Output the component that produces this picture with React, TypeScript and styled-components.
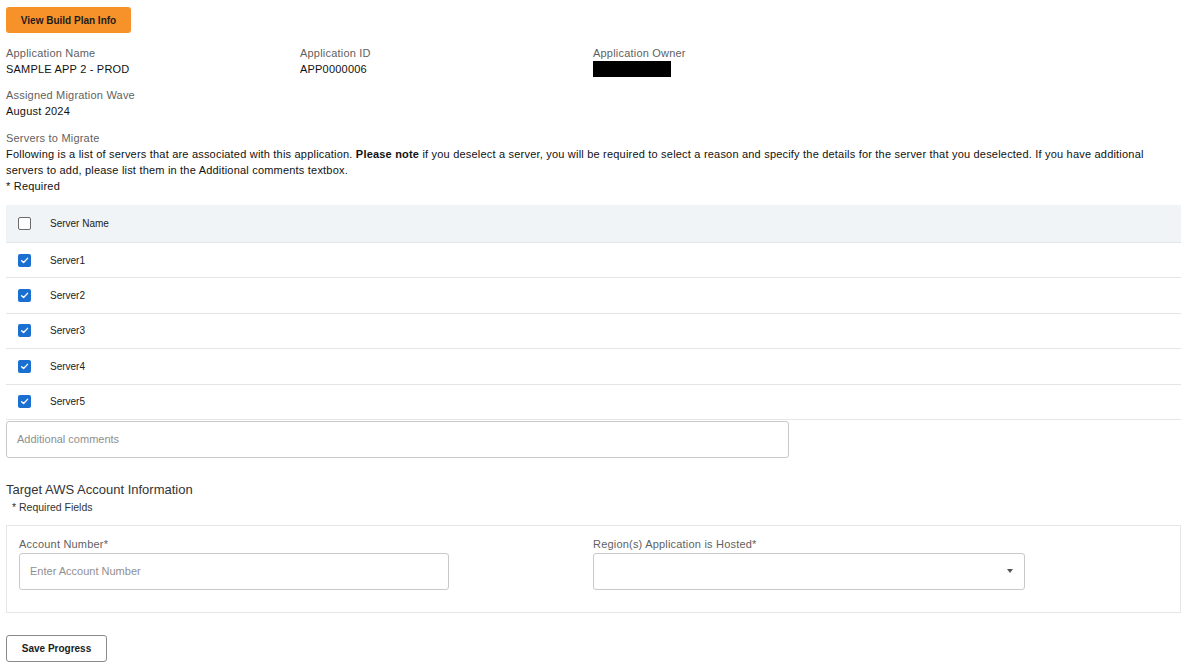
import styled, { createGlobalStyle } from "styled-components";

const GlobalStyle = createGlobalStyle`
  body {
    margin: 0;
    background: #ffffff;
    font-family: "Liberation Sans", Arial, sans-serif;
    color: #111111;
  }
`;

const Page = styled.div`
  padding: 7px 9px 4px 6px;
  width: 1175px;
`;

const OrangeButton = styled.button`
  width: 125px;
  height: 26px;
  border: none;
  border-radius: 3px;
  background: #f7922a;
  color: #1c1c1c;
  font-family: inherit;
  font-size: 10px;
  font-weight: 700;
  padding: 0;
  cursor: pointer;
`;

const InfoGrid = styled.div`
  display: grid;
  grid-template-columns: 294px 293px 1fr;
  row-gap: 10px;
  margin-top: 12px;
`;

const Field = styled.div`
  display: flex;
  flex-direction: column;
`;

const Label = styled.div`
  font-size: 11px;
  line-height: 16px;
  letter-spacing: 0.2px;
  color: #5f5f5f;
`;

const Value = styled.div`
  font-size: 11px;
  line-height: 16px;
  letter-spacing: 0.2px;
  color: #111111;
`;

const Redacted = styled.div`
  width: 78px;
  height: 16px;
  background: #000000;
`;

const Section = styled.div`
  margin-top: 11px;
`;

const Paragraph = styled.p`
  margin: 0;
  font-size: 11px;
  line-height: 16px;
  letter-spacing: 0.2px;
  color: #111111;
  width: 1160px;

  b {
    font-weight: 700;
  }
`;

const Table = styled.div`
  margin-top: 11px;
  display: flex;
  flex-direction: column;
`;

const Row = styled.div<{ $header?: boolean }>`
  display: flex;
  align-items: center;
  box-sizing: border-box;
  height: ${(p) => (p.$header ? "38px" : "35.4px")};
  padding-left: 12px;
  gap: 19px;
  background: ${(p) => (p.$header ? "#f1f4f6" : "#ffffff")};
  border-bottom: 1px solid #e3e6e8;
  font-size: 10px;
  color: #222222;
`;

const Box = styled.span<{ $checked?: boolean }>`
  width: 13px;
  height: 13px;
  box-sizing: border-box;
  border-radius: 2px;
  display: inline-flex;
  align-items: center;
  justify-content: center;
  background: ${(p) => (p.$checked ? "#1b6fd0" : "#ffffff")};
  border: ${(p) => (p.$checked ? "none" : "1.5px solid #6b6b6b")};
`;

const Check = () => (
  <svg width="9" height="9" viewBox="0 0 10 10">
    <path d="M1.8 5.2 L4 7.3 L8.4 2.6" fill="none" stroke="#ffffff" strokeWidth="1.5" strokeLinecap="round" strokeLinejoin="round" />
  </svg>
);

const Comments = styled.div`
  width: 783px;
  height: 37px;
  box-sizing: border-box;
  margin-top: 1px;
  border: 1px solid #c9c9c9;
  border-radius: 3px;
  padding-left: 10px;
  display: flex;
  align-items: center;
  font-size: 11px;
  color: #8f8f8f;
`;

const Heading = styled.div`
  margin-top: 23px;
  font-size: 13px;
  line-height: 18px;
  color: #333333;
`;

const SubNote = styled.div`
  padding-left: 6px;
  font-size: 10.5px;
  line-height: 16px;
  color: #333333;
`;

const FormBox = styled.div`
  margin-top: 10px;
  border: 1px solid #e6e6e6;
  box-sizing: border-box;
  height: 88px;
  padding: 10px 12px 0;
  display: grid;
  grid-template-columns: 574px 1fr;
`;

const FormField = styled.div`
  display: flex;
  flex-direction: column;
  gap: 1px;
`;

const InputBox = styled.div<{ $w: number }>`
  width: ${(p) => p.$w}px;
  height: 37px;
  box-sizing: border-box;
  border: 1px solid #c9c9c9;
  border-radius: 3px;
  padding: 0 10px;
  display: flex;
  align-items: center;
  justify-content: space-between;
  font-size: 11px;
  color: #8f8f8f;
`;

const Caret = styled.span`
  width: 0;
  height: 0;
  border-left: 3.5px solid transparent;
  border-right: 3.5px solid transparent;
  border-top: 4px solid #555555;
  margin-right: 1px;
`;

const OutlineButton = styled.button`
  margin-top: 22px;
  width: 101px;
  height: 27px;
  background: #ffffff;
  border: 1px solid #8a8a8a;
  border-radius: 3px;
  font-family: inherit;
  font-size: 10px;
  font-weight: 700;
  color: #1c1c1c;
  padding: 0;
  cursor: pointer;
`;

const servers = ["Server1", "Server2", "Server3", "Server4", "Server5"];

export default function App() {
  return (
    <Page>
      <GlobalStyle />
      <OrangeButton>View Build Plan Info</OrangeButton>

      <InfoGrid>
        <Field>
          <Label>Application Name</Label>
          <Value>SAMPLE APP 2 - PROD</Value>
        </Field>
        <Field>
          <Label>Application ID</Label>
          <Value>APP0000006</Value>
        </Field>
        <Field>
          <Label>Application Owner</Label>
          <Redacted />
        </Field>
        <Field>
          <Label>Assigned Migration Wave</Label>
          <Value>August 2024</Value>
        </Field>
      </InfoGrid>

      <Section>
        <Label>Servers to Migrate</Label>
        <Paragraph>
          Following is a list of servers that are associated with this application. <b>Please note</b> if you
          deselect a server, you will be required to select a reason and specify the details for the server that
          you deselected. If you have additional servers to add, please list them in the Additional comments
          textbox.
        </Paragraph>
        <Paragraph>* Required</Paragraph>
      </Section>

      <Table>
        <Row $header>
          <Box />
          <span>Server Name</span>
        </Row>
        {servers.map((s) => (
          <Row key={s}>
            <Box $checked>
              <Check />
            </Box>
            <span>{s}</span>
          </Row>
        ))}
      </Table>

      <Comments>Additional comments</Comments>

      <Heading>Target AWS Account Information</Heading>
      <SubNote>* Required Fields</SubNote>

      <FormBox>
        <FormField>
          <Label>Account Number*</Label>
          <InputBox $w={430}>Enter Account Number</InputBox>
        </FormField>
        <FormField>
          <Label>Region(s) Application is Hosted*</Label>
          <InputBox $w={432}>
            <span />
            <Caret />
          </InputBox>
        </FormField>
      </FormBox>

      <OutlineButton>Save Progress</OutlineButton>
    </Page>
  );
}
